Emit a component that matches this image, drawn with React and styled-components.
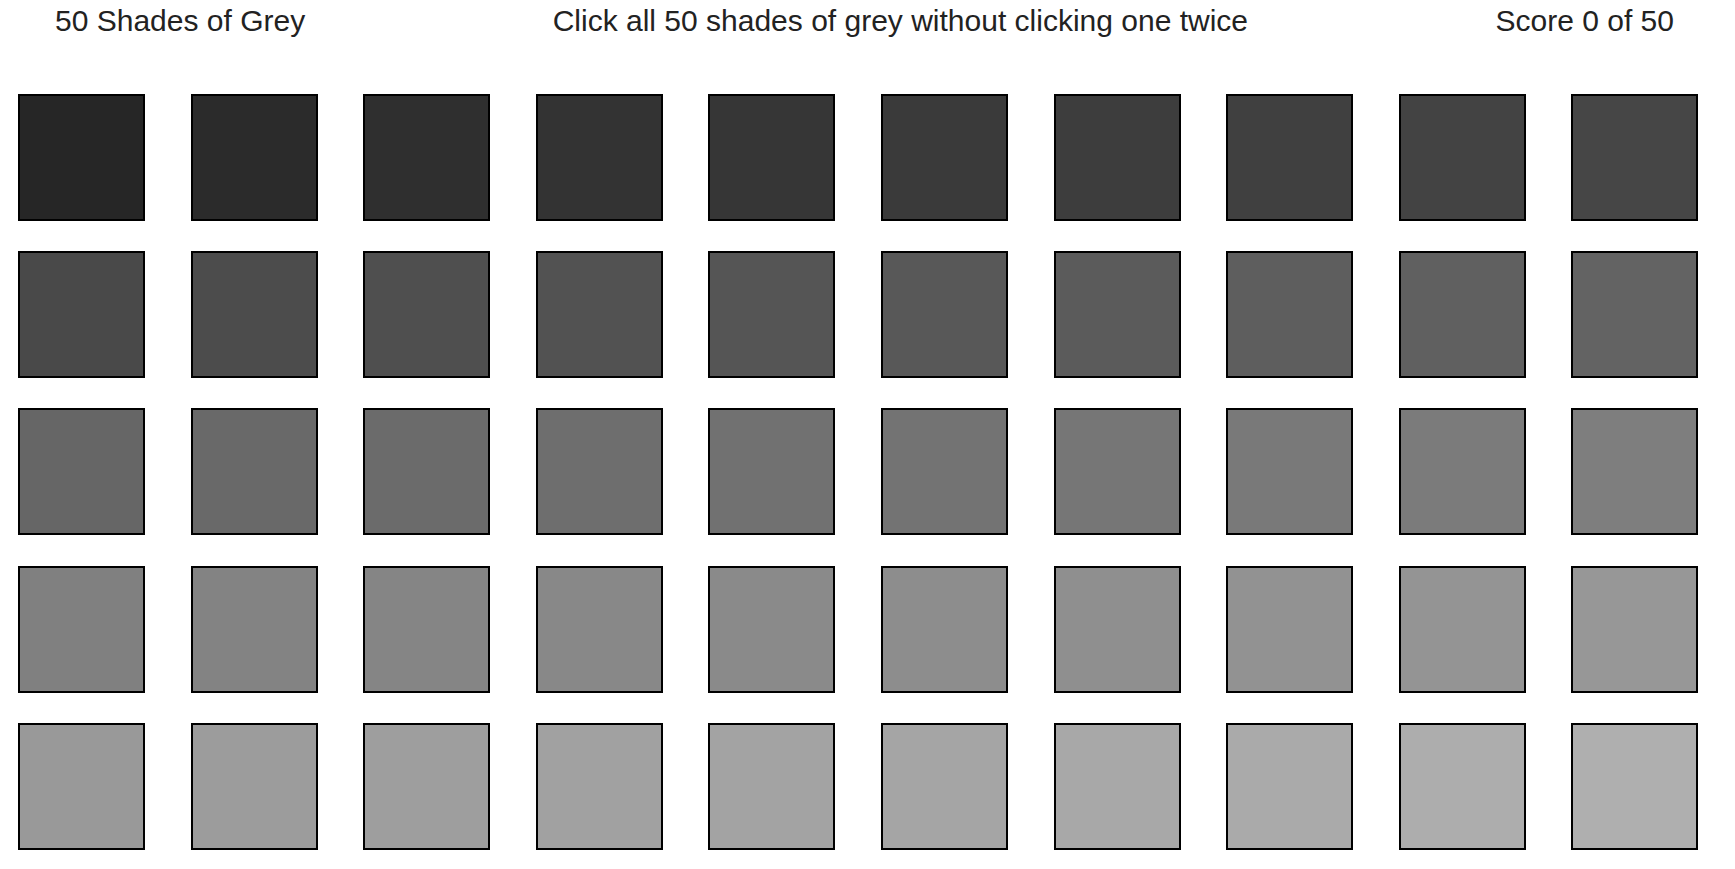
import React from "react";
import styled, { createGlobalStyle } from "styled-components";

const GlobalStyle = createGlobalStyle`
  body {
    margin: 0;
    background: #ffffff;
    font-family: "Liberation Sans", Arial, sans-serif;
  }
`;

const TOTAL = 50;

// darker shades step a little wider than lighter ones
const shadeOf = (i) => {
  const t = i / (TOTAL - 1);
  const v = Math.round(38 + 137 * Math.pow(t, 0.85));
  return `rgb(${v}, ${v}, ${v})`;
};

const App = () => {
  const shades = Array.from({ length: TOTAL }, (_, i) => shadeOf(i));

  return (
    <Page>
      <GlobalStyle />
      <Header>
        <Title>50 Shades of Grey</Title>
        <Title>Click all 50 shades of grey without clicking one twice</Title>
        <Title>Score 0 of 50</Title>
      </Header>

      <Board>
        {shades.map((shade, i) => (
          <Tile key={i} $shade={shade} />
        ))}
      </Board>
    </Page>
  );
};

export default App;

const Page = styled.main`
  width: 1735px;
  height: 869px;
  overflow: hidden;
`;

const Header = styled.header`
  display: flex;
  align-items: center;
  justify-content: space-between;
  padding: 4px 61px 0 55px;
`;

const Title = styled.div`
  color: #222222;
  font-size: 30px;
  line-height: normal;
  white-space: nowrap;
`;

const Board = styled.section`
  display: grid;
  grid-template-columns: repeat(10, 127px);
  column-gap: 45.6px;
  row-gap: 30.4px;
  margin-top: 55.5px;
  padding-left: 18px;
`;

const Tile = styled.div`
  width: 127px;
  height: 127px;
  box-sizing: border-box;
  border: 2px solid #000000;
  background-color: ${(p) => p.$shade};
  cursor: pointer;
`;
